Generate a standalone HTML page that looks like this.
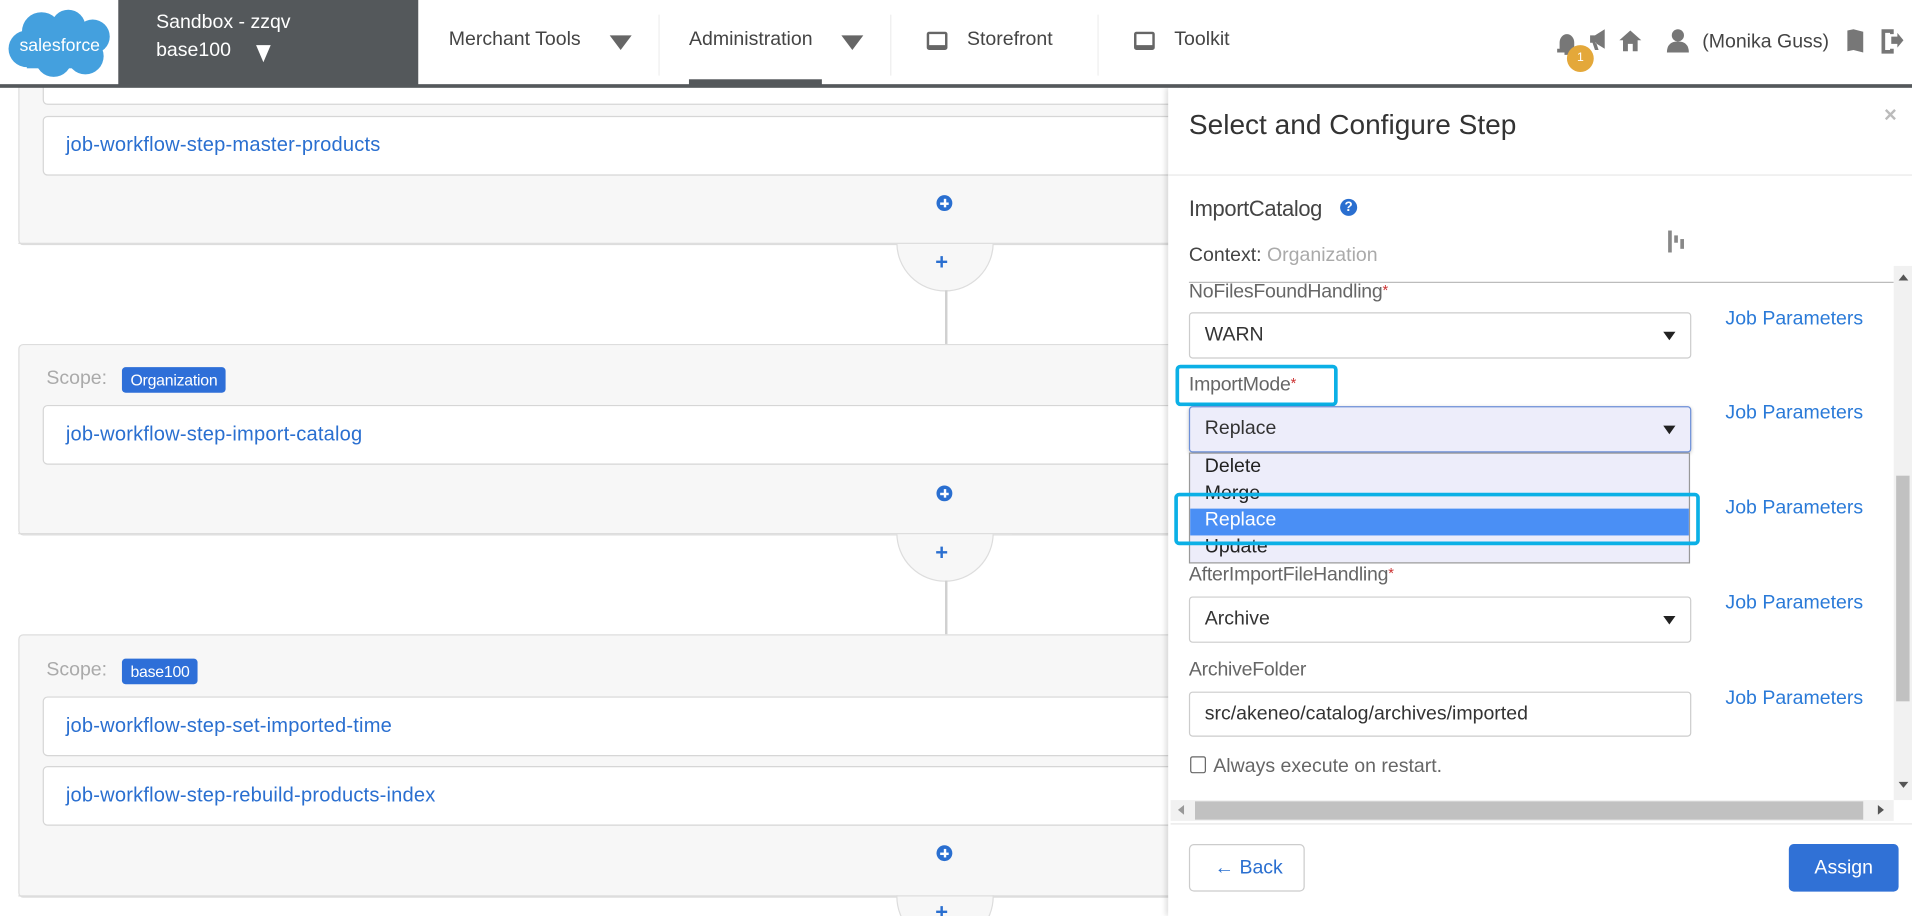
<!DOCTYPE html>
<html><head><meta charset="utf-8"><style>
*{box-sizing:border-box;margin:0;padding:0}
html,body{width:1912px;height:916px;overflow:hidden;background:#fff}
#w{position:absolute;left:0;top:0;width:1568px;height:751px;transform:scale(1.21939,1.21971);transform-origin:0 0;font-family:"Liberation Sans",sans-serif;overflow:hidden}
.a{position:absolute}
#hd{position:absolute;left:0;top:0;width:1568px;height:72px;z-index:5}
.nav{font-size:16px;color:#444;top:24px}
.tri{width:0;height:0;border-left:9px solid transparent;border-right:9px solid transparent;border-top:12px solid #666}
.sep{width:1px;background:#eee;top:12px;height:50px}
.card{background:#f7f7f7;border:1px solid #ddd;border-radius:4px;left:15px;width:960px}
.box{background:#fff;border:1px solid #d6d6d6;border-radius:4px;left:35px;width:940px;height:49px;font-size:16.5px;color:#2a6fd0;padding:14px 0 0 18px;letter-spacing:0.15px}
.pc{width:13px;height:13px;border-radius:50%;background:#2a6fd0;left:768px}
.pc:before{content:"";position:absolute;left:3px;top:5.5px;width:7px;height:2px;background:#fff}
.pc:after{content:"";position:absolute;left:5.5px;top:3px;width:2px;height:7px;background:#fff}
.conn{left:735px;width:80px;height:80px;border-radius:50%;background:#f7f7f7;border:1px solid #ddd}
.plus{color:#2a6fd0;font-weight:bold;font-size:18px;left:767px}
.vl{left:775px;width:2px;background:#d0d0d0}
.scope{font-size:16px;color:#aaa;left:38px}
.badge{background:#2e6fd8;color:#fff;font-size:13px;border-radius:3px;padding:3px 7px;left:100px;letter-spacing:-0.2px}
.lbl{font-size:16px;color:#666;left:975px;letter-spacing:-0.2px}
.lbl i{color:#c33;font-style:normal;font-size:12px;vertical-align:top}
.sel{left:975px;width:412px;height:38px;border:1px solid #ccc;border-radius:3px;background:#fff;font-size:16px;color:#333;padding:9px 12px}
.sel .ar{position:absolute;right:12px;top:15px;width:0;height:0;border-left:5px solid transparent;border-right:5px solid transparent;border-top:7px solid #222}
.jp{left:1415px;font-size:16px;color:#2a7ad8;letter-spacing:0}
.opt{position:absolute;left:12px;font-size:16px;color:#222}
.hl{position:absolute;border:3px solid #0bb0e6;border-radius:4px}
.ic{fill:#777}
</style></head><body><div id="w">

<!-- left cards -->
<div class="a card" style="top:40px;height:161px"></div>
<div class="a box" style="top:40px;height:46px"></div>
<div class="a box" style="top:95px">job-workflow-step-master-products</div>
<div class="a conn" style="top:159px"></div>
<div class="a" style="left:730px;top:150px;width:100px;height:50px;background:#f7f7f7"></div>
<div class="a pc" style="top:160px"></div>
<div class="a" style="left:15px;top:199px;width:960px;height:1px;background:#ddd"></div>
<div class="a plus" style="top:205px">+</div>
<div class="a vl" style="top:238px;height:44px"></div>

<div class="a card" style="top:282px;height:157px"></div>
<div class="a scope" style="top:302px">Scope:</div>
<div class="a badge" style="top:301px">Organization</div>
<div class="a box" style="top:332px">job-workflow-step-import-catalog</div>
<div class="a conn" style="top:397px"></div>
<div class="a" style="left:730px;top:390px;width:100px;height:48px;background:#f7f7f7"></div>
<div class="a" style="left:15px;top:437px;width:960px;height:1px;background:#ddd"></div>
<div class="a pc" style="top:398px"></div>
<div class="a plus" style="top:443px">+</div>
<div class="a vl" style="top:476px;height:44px"></div>

<div class="a card" style="top:520px;height:216px"></div>
<div class="a scope" style="top:541px">Scope:</div>
<div class="a badge" style="top:540px">base100</div>
<div class="a box" style="top:571px">job-workflow-step-set-imported-time</div>
<div class="a box" style="top:628px">job-workflow-step-rebuild-products-index</div>
<div class="a conn" style="top:695px"></div>
<div class="a" style="left:730px;top:690px;width:100px;height:44px;background:#f7f7f7"></div>
<div class="a" style="left:15px;top:734px;width:960px;height:1px;background:#ddd"></div>
<div class="a pc" style="top:693px"></div>
<div class="a plus" style="top:738px">+</div>

<!-- header -->
<div id="hd">
<div class="a" style="left:0;top:0;width:1568px;height:70px;background:#fff"></div>
<svg class="a" style="left:4px;top:6px" width="90" height="60" viewBox="0 0 90 60"><g fill="#44a0de"><circle cx="30" cy="20" r="16"/><circle cx="52" cy="16" r="14"/><circle cx="72" cy="24" r="14"/><circle cx="18" cy="34" r="15"/><circle cx="40" cy="42" r="15"/><circle cx="66" cy="40" r="15"/><rect x="18" y="20" width="56" height="30"/></g><text x="45" y="36" fill="#fff" font-size="14.5" text-anchor="middle" font-family="Liberation Sans">salesforce</text></svg>
<div class="a" style="left:97px;top:0;width:246px;height:70px;background:#54585b"></div>
<div class="a" style="left:128px;top:10px;color:#fff;font-size:16px">Sandbox - zzqv</div>
<div class="a" style="left:128px;top:33px;color:#fff;font-size:16px">base100</div>
<div class="a tri" style="left:210px;top:37px;border-top-color:#fff;border-left-width:6px;border-right-width:6px;border-top-width:14px"></div>
<div class="a nav" style="left:368px">Merchant Tools</div><div class="a tri" style="left:500px;top:29px"></div>
<div class="a sep" style="left:540px"></div>
<div class="a nav" style="left:565px">Administration</div><div class="a tri" style="left:690px;top:29px"></div>
<div class="a" style="left:565px;top:65px;width:109px;height:5px;background:#54585b"></div>
<div class="a sep" style="left:730px"></div>
<div class="a" style="left:760px;top:26px;width:17px;height:15px;border:2px solid #666;border-radius:2px;border-bottom-width:4px"></div>
<div class="a nav" style="left:793px">Storefront</div>
<div class="a sep" style="left:900px"></div>
<div class="a" style="left:930px;top:26px;width:17px;height:15px;border:2px solid #666;border-radius:2px;border-bottom-width:4px"></div>
<div class="a nav" style="left:963px">Toolkit</div>
<svg class="a" style="left:1275px;top:22px" width="290" height="40" viewBox="0 0 290 40">
<path class="ic" d="M4 13 a6 7 0 0 1 12 0 v5 h2 v3 h-16 v-3 h2z M8 21 h4 v2 h-4z"/>
<path class="ic" d="M29 7 h4 l8 -5 v16 l-8 -5 h-4z M31 13 l2 6 h3 l-2 -6z"/>
<path class="ic" d="M71 3 l9 8 h-3 v9 h-4 v-6 h-4 v6 h-4 v-9 h-3z" transform="translate(-9 0)"/>
<circle class="ic" cx="101" cy="7" r="5"/><path class="ic" d="M92 21 q0 -9 9 -9 q9 0 9 9z"/>
<text x="121" y="17" font-size="16" fill="#444" font-family="Liberation Sans">(Monika Guss)</text>
<path class="ic" d="M240 3 l5 -1 l8 2 v17 l-8 -2 l-5 1z"/>
<path class="ic" d="M268 2 h10 v4 h-3 v-1 h-4 v14 h4 v-1 h3 v4 h-10z M276 8 h5 v-3 l5 6 l-5 6 v-3 h-5z"/>
</svg>
<div class="a" style="left:1285px;top:37px;width:22px;height:22px;border-radius:50%;background:#e4a83a;color:#fff;font-size:10px;text-align:center;line-height:22px">1</div>
<div class="a" style="left:0;top:69px;width:1568px;height:3px;background:#54585b"></div>
</div>

<!-- right panel -->
<div class="a" style="left:958px;top:72px;width:610px;height:679px;background:#fff;box-shadow:-2px 0 4px rgba(0,0,0,.12)"></div>
<div class="a" style="left:975px;top:89px;font-size:23px;color:#333;letter-spacing:0">Select and Configure Step</div>
<div class="a" style="left:1545px;top:84px;font-size:18px;color:#bbb;font-weight:bold">×</div>
<div class="a" style="left:958px;top:143px;width:610px;height:1px;background:#e8e8e8"></div>
<div class="a" style="left:975px;top:161px;font-size:18px;color:#444;letter-spacing:-0.3px">ImportCatalog</div>
<div class="a" style="left:1099px;top:163px;width:14px;height:14px;border-radius:50%;background:#2a6fd0;color:#fff;font-size:11px;font-weight:bold;text-align:center;line-height:14px">?</div>
<div class="a" style="left:1368px;top:189px;width:3px;height:18px;background:#888"></div>
<div class="a" style="left:1373px;top:193px;width:3px;height:6px;background:#888"></div>
<div class="a" style="left:1378px;top:196px;width:3px;height:8px;background:#888"></div>
<div class="a" style="left:975px;top:201px;font-size:16px;color:#444">Context: <span style="color:#aaa">Organization</span></div>
<div class="a" style="left:975px;top:231px;width:578px;height:1px;background:#bbb"></div>

<div class="a lbl" style="top:231px">NoFilesFoundHandling<i>*</i></div>
<div class="a sel" style="top:256px">WARN<span class="ar"></span></div>
<div class="a jp" style="top:253px">Job Parameters</div>

<div class="a lbl" style="top:307px">ImportMode<i>*</i></div>
<div class="hl" style="left:964px;top:299px;width:133px;height:34px"></div>
<div class="a sel" style="top:333px;background:#ededfa;border-color:#6d8fd8;box-shadow:0 1px 3px rgba(0,0,0,.2)">Replace<span class="ar"></span></div>
<div class="a jp" style="top:330px">Job Parameters</div>
<div class="a jp" style="top:408px">Job Parameters</div>
<div class="a" style="left:975px;top:371px;width:411px;height:91px;background:#ededfa;border:1px solid #999;overflow:hidden">
<span class="opt" style="top:2px">Delete</span>
<span class="opt" style="top:24px">Merge</span>
<div style="position:absolute;left:0;top:45px;width:411px;height:22px;background:#4a8ff5"></div>
<span class="opt" style="top:46px;color:#fff">Replace</span>
<span class="opt" style="top:68px">Update</span>
</div>
<div class="hl" style="left:963px;top:404px;width:431px;height:43px"></div>

<div class="a lbl" style="top:463px">AfterImportFileHandling<i>*</i></div>
<div class="a sel" style="top:489px">Archive<span class="ar"></span></div>
<div class="a jp" style="top:486px">Job Parameters</div>

<div class="a lbl" style="top:541px">ArchiveFolder</div>
<div class="a sel" style="top:567px;height:37px">src/akeneo/catalog/archives/imported</div>
<div class="a jp" style="top:564px">Job Parameters</div>

<div class="a" style="left:976px;top:620px;width:13px;height:14px;border:1px solid #666;border-radius:2px"></div>
<div class="a" style="left:995px;top:620px;font-size:16px;color:#666">Always execute on restart.</div>

<!-- scrollbars -->
<div class="a" style="left:1553px;top:218px;width:15px;height:438px;background:#f1f1f1"></div>
<div class="a" style="left:1555px;top:390px;width:11px;height:185px;background:#c1c1c1"></div>
<div class="a" style="left:1557px;top:225px;border-left:4px solid transparent;border-right:4px solid transparent;border-bottom:5px solid #555"></div>
<div class="a" style="left:1557px;top:641px;border-left:4px solid transparent;border-right:4px solid transparent;border-top:5px solid #555"></div>
<div class="a" style="left:960px;top:656px;width:593px;height:17px;background:#f1f1f1"></div>
<div class="a" style="left:980px;top:657px;width:548px;height:15px;background:#c1c1c1"></div>
<div class="a" style="left:966px;top:660px;border-top:4px solid transparent;border-bottom:4px solid transparent;border-right:5px solid #999"></div>
<div class="a" style="left:1540px;top:660px;border-top:4px solid transparent;border-bottom:4px solid transparent;border-left:5px solid #555"></div>
<div class="a" style="left:960px;top:675px;width:608px;height:1px;background:#e5e5e5"></div>

<div class="a" style="left:975px;top:692px;width:95px;height:39px;border:1px solid #ccc;border-radius:4px;color:#2a6fd0;font-size:16px;padding:10px 0 0 20px"><b>&#8592;</b> Back</div>
<div class="a" style="left:1467px;top:692px;width:90px;height:39px;background:#3071d6;border-radius:4px;color:#fff;font-size:16px;text-align:center;line-height:39px">Assign</div>
</div></body></html>
